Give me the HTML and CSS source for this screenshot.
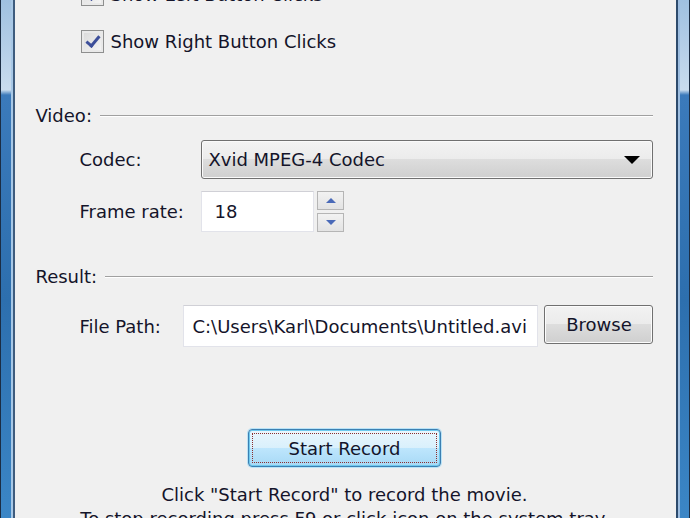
FILE: index.html
```html
<!DOCTYPE html>
<html lang="en">

<head>
    <meta charset="UTF-8">
    <title>Screen Recorder Options</title>
    <link rel="stylesheet" href="styles.css">
</head>

<body>
    <div class="window">
        <div class="frame frame-left"></div>

        <main class="content">
            <label class="check-row first">
                <span class="checkbox checked"></span>
                <span>Show Left Button Clicks</span>
            </label>
            <label class="check-row second">
                <span class="checkbox checked"></span>
                <span>Show Right Button Clicks</span>
            </label>

            <div class="group-title video-title">
                <span>Video:</span>
                <span class="rule"></span>
            </div>

            <div class="field-row codec-row">
                <span class="field-label">Codec:</span>
                <div class="combo">
                    <span>Xvid MPEG-4 Codec</span>
                    <span class="combo-arrow"></span>
                </div>
            </div>

            <div class="field-row rate-row">
                <span class="field-label">Frame rate:</span>
                <div class="textbox rate-box">18</div>
                <div class="spinner">
                    <span class="spin-btn"><span class="tri up"></span></span>
                    <span class="spin-btn"><span class="tri down"></span></span>
                </div>
            </div>

            <div class="group-title result-title">
                <span>Result:</span>
                <span class="rule"></span>
            </div>

            <div class="field-row path-row">
                <span class="field-label path-label">File Path:</span>
                <div class="textbox path-box">C:\Users\Karl\Documents\Untitled.avi</div>
                <button class="btn browse">Browse</button>
            </div>

            <div class="record-area">
                <button class="btn record"><span class="focus">Start Record</span></button>
                <p class="hint">Click "Start Record" to record the movie.<br>
                    To stop recording press F9 or click icon on the system tray.</p>
            </div>
        </main>

        <div class="frame frame-right"></div>
    </div>
</body>

</html>
```

FILE: styles.css
```css
/* General */
html,
body {
    margin: 0;
    padding: 0;
    height: 518px;
    overflow: hidden;
}

body {
    font-family: "DejaVu Sans", sans-serif;
    font-size: 18px;
    color: #14142a;
    background-color: #f0f0f0;
}

.window {
    display: flex;
    height: 518px;
}

/* Window border (Aero blue) */
.frame {
    background: linear-gradient(to bottom, #9fc0e0 0, #c9dcee 90px, #3b7abb 95px, #2d6fae 300px, #3b86c6 518px);
}

.frame-left {
    width: 13px;
    border-left: 1px solid #1b2d44;
    border-right: 2px solid #3e5c7e;
    box-shadow: inset -2px 0 0 #a8c8e6;
}

.frame-right {
    width: 11px;
    margin-left: 1px;
    border-left: 2px solid #2c4a6c;
    border-right: 1px solid #1b2d44;
    box-shadow: inset 2px 0 0 #9cbde0;
}

.content {
    flex: 1;
    display: flex;
    flex-direction: column;
    padding: 0 22px 0 20px;
}

/* Checkboxes */
.check-row {
    display: flex;
    align-items: center;
    gap: 6px;
    height: 23px;
    margin-left: 46px;
}

.check-row.first {
    margin-top: -17px;
}

.check-row.second {
    margin-top: 24px;
}

.checkbox {
    width: 21px;
    height: 21px;
    border: 1px solid #8e8f8f;
    background: linear-gradient(135deg, #d8d8d8, #f7f7f7);
    box-shadow: inset 0 0 0 2px #e9e9e9;
    position: relative;
}

.checkbox.checked::after {
    content: "";
    position: absolute;
    left: 7px;
    top: 2px;
    width: 5px;
    height: 11px;
    border: solid #3d4f9a;
    border-width: 0 3px 3px 0;
    transform: rotate(40deg);
}

/* Group titles with rule */
.group-title {
    display: flex;
    align-items: center;
    gap: 8px;
    height: 22px;
}

.video-title {
    margin-top: 52px;
}

.result-title {
    margin-top: 34px;
}

.rule {
    flex: 1;
    height: 1px;
    background-color: #a0a0a0;
    border-bottom: 1px solid #fff;
}

/* Field rows */
.field-row {
    display: flex;
    align-items: center;
    margin-left: 44px;
}

.field-label {
    width: 122px;
}

.path-label {
    width: 104px;
}

.codec-row {
    margin-top: 14px;
}

.rate-row {
    margin-top: 12px;
}

.path-row {
    margin-top: 18px;
}

.combo {
    flex: 1;
    height: 37px;
    display: flex;
    align-items: center;
    justify-content: space-between;
    padding: 0 12px 0 6px;
    border: 1px solid #707070;
    border-radius: 3px;
    background: linear-gradient(to bottom, #f3f3f3 0, #ebebeb 50%, #dddddd 50%, #cfcfcf 100%);
    box-shadow: inset 0 0 0 1px #fafafa;
}

.combo-arrow {
    width: 0;
    height: 0;
    border-left: 8px solid transparent;
    border-right: 8px solid transparent;
    border-top: 8px solid #000;
}

.textbox {
    height: 39px;
    display: flex;
    align-items: center;
    padding: 0 8px;
    background-color: #fff;
    border: 1px solid #e2e3ea;
    border-top-color: #d0d0d6;
    box-sizing: border-box;
}

.rate-box {
    width: 113px;
    height: 41px;
    padding-left: 12px;
}

.spinner {
    display: flex;
    flex-direction: column;
    gap: 3px;
    margin-left: 3px;
}

.spin-btn {
    width: 25px;
    height: 17px;
    border: 1px solid #b5b5b5;
    background: linear-gradient(to bottom, #f2f2f2, #e3e3e3);
    display: flex;
    align-items: center;
    justify-content: center;
}

.tri {
    width: 0;
    height: 0;
    border-left: 5px solid transparent;
    border-right: 5px solid transparent;
}

.tri.up {
    border-bottom: 5px solid #4a6ab8;
}

.tri.down {
    border-top: 5px solid #4a6ab8;
}

.path-box {
    width: 355px;
    height: 42px;
}

/* Buttons */
.btn {
    font-family: inherit;
    font-size: 18px;
    color: #14142a;
    border: 1px solid #707070;
    border-radius: 3px;
    background: linear-gradient(to bottom, #f2f2f2 0, #ebebeb 50%, #dddddd 50%, #cfcfcf 100%);
    box-shadow: inset 0 0 0 1px #fcfcfc;
    padding: 0;
}

.browse {
    width: 109px;
    height: 39px;
    margin-left: 6px;
    margin-top: -3px;
}

.record-area {
    display: flex;
    flex-direction: column;
    align-items: center;
    margin-top: 82px;
    padding-left: 0;
}

.record {
    width: 193px;
    height: 38px;
    border: 1px solid #3c7fb1;
    border-radius: 4px;
    background: linear-gradient(to bottom, #eaf6fd 0, #d9f0fc 50%, #bee6fd 50%, #a7d9f5 100%);
    box-shadow: inset 0 0 0 1px #6fc9ee, 0 0 0 1px #b9e3f7;
    display: flex;
    padding: 3px;
}

.focus {
    flex: 1;
    display: flex;
    align-items: center;
    justify-content: center;
    border: 1px dotted #8a2f2f;
}

.hint {
    margin: 16px 0 0;
    text-align: center;
    line-height: 24px;
    white-space: nowrap;
}
```
